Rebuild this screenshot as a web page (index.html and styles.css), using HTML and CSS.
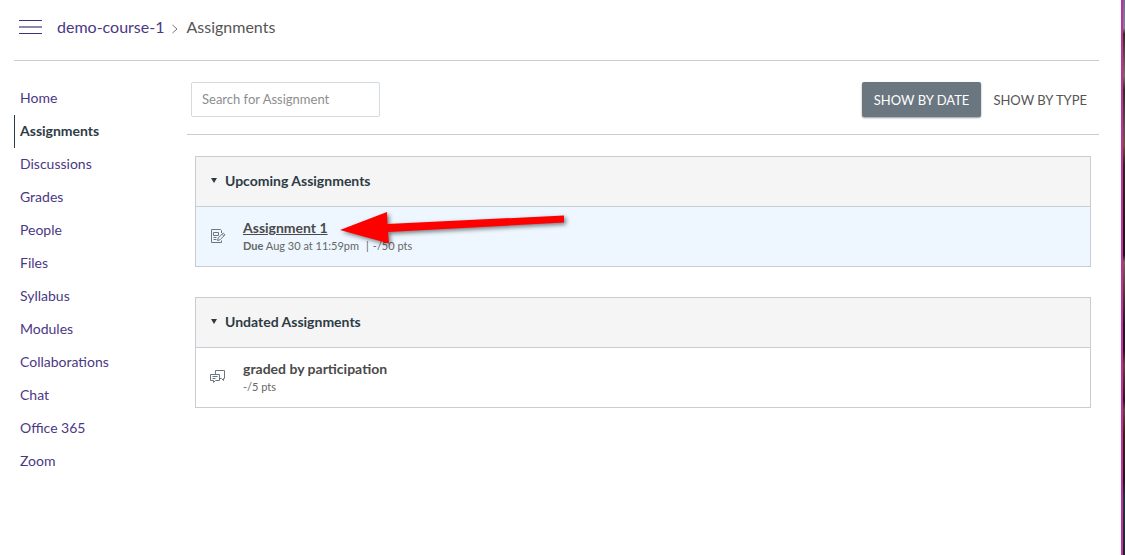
FILE: index.html
```html
<!DOCTYPE html>
<html lang="en">
<head>
<meta charset="utf-8">
<meta name="viewport" content="width=device-width, initial-scale=1">
<title>Assignments</title>
<link rel="stylesheet" href="styles.css">
</head>
<body>
<div class="page">
  <header class="topbar">
    <button class="menu-button" type="button" aria-label="Course navigation">
      <svg width="23" height="16" viewBox="0 0 23 16" fill="none"><path d="M0 1.500h23M0 14.500h23" stroke="#43307c"/><path d="M0 8h23" stroke="#8f88ac" stroke-width="2"/></svg>
    </button>
    <nav class="crumbs" aria-label="Breadcrumb">
      <a href="#">demo-course-1</a>
      <svg width="6" height="13" viewBox="0 0 6 13" fill="none" stroke="#777"><path d="M.5 4l4.500 4-4.500 4"/></svg>
      <span>Assignments</span>
    </nav>
  </header>
  <div class="columns">
    <nav class="side" aria-label="Course">
      <a href="#">Home</a>
      <a href="#" class="active">Assignments</a>
      <a href="#">Discussions</a>
      <a href="#">Grades</a>
      <a href="#">People</a>
      <a href="#">Files</a>
      <a href="#">Syllabus</a>
      <a href="#">Modules</a>
      <a href="#">Collaborations</a>
      <a href="#">Chat</a>
      <a href="#">Office 365</a>
      <a href="#">Zoom</a>
    </nav>
    <main class="content">
      <div class="toolbar">
        <input class="search" type="text" placeholder="Search for Assignment" aria-label="Search for Assignment">
        <div class="toggle">
          <button type="button" class="selected">SHOW BY DATE</button>
          <button type="button">SHOW BY TYPE</button>
        </div>
      </div>
      <div class="groups">
        <section class="group">
          <h2><button type="button" class="group-toggle"><svg width="6" height="7" viewBox="0 0 6 7"><path d="M0 0h6L3 5z" fill="#2d3b45"/></svg>Upcoming Assignments</button></h2>
          <div class="row highlighted">
            <svg class="type-icon" width="16" height="16" viewBox="0 0 16 16" fill="none" stroke="#6b7780"><path d="M11.500 5v-2.500l-1-1h-9v13h10v-2M3.500 4.500h5v3h-5zM3.500 9.500h3M3.500 11.500h3"/><path d="M7.500 12.500l.7-2.500 5-5 1.800 1.800-5 5zM12 6.200l1.800 1.800"/></svg>
            <div class="details">
              <a class="title underlined" href="#">Assignment 1</a>
              <p class="meta"><span><strong>Due</strong> Aug 30 at 11:59pm</span><span class="points"><span>|</span><span>-/50 pts</span></span></p>
            </div>
            <svg class="arrow" width="240" height="48" viewBox="0 0 240 48"><path d="M10 22L57 4l.5 12L234 7.500v7L58 24l1 11.500z" fill="#f00"/></svg>
          </div>
        </section>
        <section class="group">
          <h2><button type="button" class="group-toggle"><svg width="6" height="7" viewBox="0 0 6 7"><path d="M0 0h6L3 5z" fill="#2d3b45"/></svg>Undated Assignments</button></h2>
          <div class="row">
            <svg class="type-icon" width="16" height="16" viewBox="0 0 16 16" fill="none" stroke="#6b7780"><path d="M.5 5.500h9v6h-4l-2 2v-2h-3zM2.500 7.500h5M2.500 9.500h3"/><path d="M5.500 5.500v-4h9v8h-1v2l-2-2h-2"/></svg>
            <div class="details">
              <a class="title" href="#">graded by participation</a>
              <p class="meta"><span>-/5 pts</span></p>
            </div>
          </div>
        </section>
      </div>
    </main>
  </div>
</div>
<div class="edge"></div>
</body>
</html>
```
FILE: styles.css
```css
* { box-sizing: border-box; }
body {
  margin: 0;
  min-height: 100vh;
  display: flex;
  background: #fff;
  color: #2d3b45;
  font: 14px/20px Lato, "Liberation Sans", sans-serif;
}
a { color: #4b3885; text-decoration: none; }
button { font: inherit; color: inherit; border: 0; background: none; padding: 0; cursor: pointer; }
svg { flex: none; display: block; }
.page { flex: 1; min-width: 0; padding: 0 22px 0 14px; }
.edge {
  width: 4px;
  border-left: 2px solid #c62ba8;
  background: linear-gradient(#65758a 0, #7b8794 28px, #272f18 34px, #5c5648 60px, #71705d 76px, #26331c 90px, #55534a 130px, #675a35 144px, #26291a 165px, #121710 255px, #706352 262px, #514738 285px, #181c1b 325px, #1e191a 350px, #5a4339 365px, #20191b 400px, #57483b 410px, #2b260f 435px, #171b15 480px, #163c38 500px, #122b29 555px);
}
.topbar {
  display: flex;
  align-items: center;
  gap: 15px;
  height: 61px;
  padding: 0 0 6px 5px;
  border-bottom: 1px solid #c7cdd1;
}
.crumbs { display: flex; align-items: center; gap: 8px; font-size: 16px; color: #555; }
.columns { display: flex; }
.side { width: 173px; flex: none; padding-top: 21px; display: flex; flex-direction: column; }
.side a { height: 33px; padding: 6px 0 7px 5px; border-left: 1px solid transparent; }
.side a.active { color: #2d3b45; border-color: #2d3b45; font-weight: 700; }
.content { flex: 1; min-width: 0; }
.toolbar {
  display: flex;
  justify-content: space-between;
  align-items: center;
  height: 74px;
  padding: 4px 0 0 4px;
  border-bottom: 1px solid #c7cdd1;
}
.search {
  width: 189px;
  height: 35px;
  padding: 0 10px 2px;
  border: 1px solid #d3dae0;
  border-radius: 2px;
  font: 13px/20px Lato, "Liberation Sans", sans-serif;
}
.search::placeholder { color: #8e8e8e; opacity: 1; }
.toggle { display: flex; font-size: 13px; }
.toggle button { height: 35px; padding: 0 12px; color: #555; }
.toggle .selected { color: #fff; background: #6b7780; border-radius: 2px; box-shadow: 0 1px 2px rgba(0, 0, 0, .4); }
.groups { display: flex; flex-direction: column; gap: 30px; padding: 21px 8px; }
.group { border: 1px solid #c7cdd1; }
.group h2 { margin: 0; padding: 14px 15px 15px; background: #f5f5f5; border-bottom: 1px solid #c7cdd1; font-size: 14px; line-height: 20px; }
.group-toggle { display: flex; align-items: center; gap: 8px; }
.row { position: relative; display: flex; align-items: center; gap: 17px; padding: 11px 14px 12px; }
.highlighted { background: #eef7ff; }
.title { display: block; color: #4a4a4a; font-weight: 700; }
.underlined { text-decoration: underline; }
.meta { margin: 0; display: flex; gap: 7px; font-size: 11px; line-height: 16px; color: #666; }
.points { display: flex; gap: 4px; }
.arrow { position: absolute; left: 134px; top: 1px; filter: drop-shadow(2px 2px 2px rgba(0, 0, 0, .5)); }
```
